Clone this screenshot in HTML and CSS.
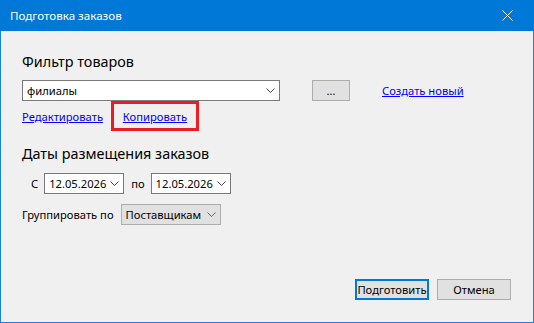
FILE: index.html
```html
<!DOCTYPE html>
<html lang="ru">
<head>
    <meta charset="UTF-8">
    <title>Подготовка заказов</title>
    <link rel="stylesheet" href="styles.css">
</head>
<body>
    <div class="window">
        <div class="titlebar">
            <span class="title">Подготовка заказов</span>
            <svg class="close" width="11" height="11" viewBox="0 0 11 11">
                <path d="M0.5 0.5 L10.5 10.5 M10.5 0.5 L0.5 10.5" stroke="#fff" stroke-width="1"/>
            </svg>
        </div>

        <div class="content">
            <h2>Фильтр товаров</h2>
            <div class="row filter-row">
                <div class="combo filter-combo">
                    <span>филиалы</span>
                    <svg class="chevron" width="9" height="5" viewBox="0 0 9 5"><path d="M0.5 0.5 L4.5 4.5 L8.5 0.5" fill="none" stroke="#444"/></svg>
                </div>
                <button class="btn dots">...</button>
                <a href="#" class="link">Создать новый</a>
            </div>
            <div class="row links-row">
                <a href="#" class="link">Редактировать</a>
                <div class="highlight"><a href="#" class="link">Копировать</a></div>
            </div>

            <h2 class="dates-title">Даты размещения заказов</h2>
            <div class="row dates-row">
                <span class="label-from">С</span>
                <div class="combo date-combo">
                    <span>12.05.2026</span>
                    <svg class="chevron" width="9" height="5" viewBox="0 0 9 5"><path d="M0.5 0.5 L4.5 4.5 L8.5 0.5" fill="none" stroke="#444"/></svg>
                </div>
                <span class="label-to">по</span>
                <div class="combo date-combo">
                    <span>12.05.2026</span>
                    <svg class="chevron" width="9" height="5" viewBox="0 0 9 5"><path d="M0.5 0.5 L4.5 4.5 L8.5 0.5" fill="none" stroke="#444"/></svg>
                </div>
            </div>
            <div class="row group-row">
                <span>Группировать по</span>
                <div class="combo group-combo">
                    <span>Поставщикам</span>
                    <svg class="chevron" width="9" height="5" viewBox="0 0 9 5"><path d="M0.5 0.5 L4.5 4.5 L8.5 0.5" fill="none" stroke="#666"/></svg>
                </div>
            </div>

            <div class="actions">
                <button class="btn primary">Подготовить</button>
                <button class="btn">Отмена</button>
            </div>
        </div>
    </div>
</body>
</html>
```

FILE: styles.css
```css
html, body {
    margin: 0;
    padding: 0;
}
body {
    font-family: "Noto Sans", "Open Sans", sans-serif;
    font-size: 11.2px;
    color: #000;
    background-color: #f0f0f0;
}
.window {
    width: 534px;
    height: 323px;
    box-sizing: border-box;
    border: 1px solid #1883d7;
    border-top: none;
    background-color: #f0f0f0;
    display: flex;
    flex-direction: column;
}
.titlebar {
    height: 31px;
    margin: 0 -1px;
    background-color: #0078d7;
    color: #fff;
    display: flex;
    align-items: center;
    justify-content: space-between;
    padding: 0 21px 0 10px;
    flex-shrink: 0;
}
.title {
    font-size: 11.6px;
}
.content {
    flex: 1;
    display: flex;
    flex-direction: column;
    padding: 21px 22px 22px 21px;
}
h2 {
    font-size: 14.4px;
    font-weight: normal;
    margin: 0;
    line-height: 20px;
    color: #000;
}
.row {
    display: flex;
    align-items: center;
}
.filter-row {
    margin-top: 8px;
}
.combo {
    height: 21px;
    box-sizing: border-box;
    border: 1px solid #7a7a7a;
    background-color: #fff;
    display: flex;
    align-items: center;
    justify-content: space-between;
    padding: 0 4px 0 4px;
}
.chevron {
    flex-shrink: 0;
}
.filter-combo {
    width: 258px;
}
.btn {
    font-family: inherit;
    font-size: 11.2px;
    height: 21px;
    box-sizing: border-box;
    background-color: #e1e1e1;
    border: 1px solid #adadad;
    padding: 0;
    color: #000;
}
.dots {
    width: 38px;
    margin-left: 32px;
    line-height: 14px;
}
.link {
    color: #0000ff;
    text-decoration: underline;
}
.filter-row .link {
    margin-left: 32px;
}
.links-row {
    height: 30px;
}
.highlight {
    margin-left: 8px;
    width: 88px;
    height: 30px;
    box-sizing: border-box;
    border: 3px solid #ed1c24;
    display: flex;
    align-items: center;
    justify-content: center;
}
.dates-title {
    margin-top: 13px;
}
.dates-row {
    margin-top: 9px;
    padding-left: 9px;
}
.date-combo {
    width: 80px;
    padding-left: 4px;
}
.label-from {
    margin-right: 6px;
}
.label-to {
    margin: 0 6px 0 7px;
}
.group-row {
    margin-top: 10px;
}
.group-combo {
    width: 100px;
    margin-left: 7px;
    background-color: #e1e1e1;
    border-color: #adadad;
}
.actions {
    margin-top: auto;
    display: flex;
    justify-content: flex-end;
    gap: 8px;
}
.actions .btn {
    width: 74px;
}
.btn.primary {
    border: 2px solid #0078d7;
}
```
